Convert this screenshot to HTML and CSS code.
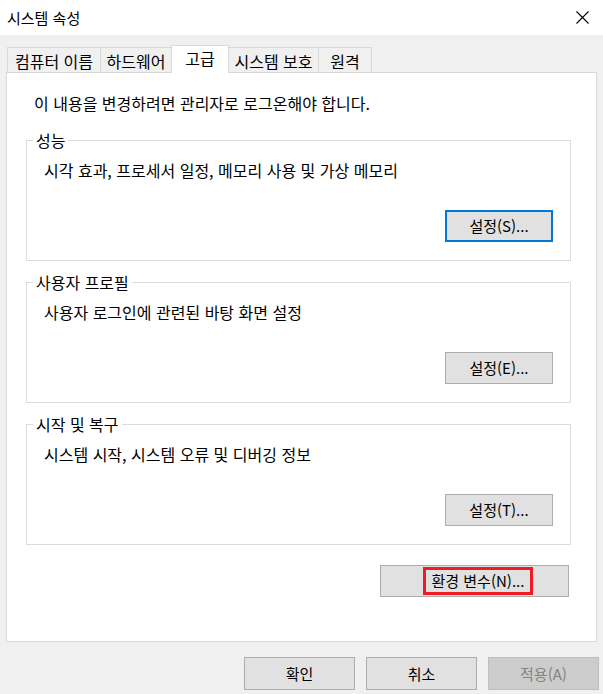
FILE: index.html
```html
<!DOCTYPE html>
<html lang="ko">
<head>
<meta charset="utf-8">
<title>시스템 속성</title>
<link rel="stylesheet" href="styles.css">
</head>
<body>
<div class="window">
  <div class="titlebar">
    <span class="title">시스템 속성</span>
    <span class="close">
      <svg width="13" height="13" viewBox="0 0 13 13"><path d="M0.5 0.5 L12.5 12.5 M12.5 0.5 L0.5 12.5" stroke="#000" stroke-width="1.1" fill="none"/></svg>
    </span>
  </div>
  <div class="tabs">
    <div class="tab t1">컴퓨터 이름</div>
    <div class="tab t2">하드웨어</div>
    <div class="tab t3 active">고급</div>
    <div class="tab t4">시스템 보호</div>
    <div class="tab t5">원격</div>
  </div>
  <div class="panel">
    <div class="intro">이 내용을 변경하려면 관리자로 로그온해야 합니다.</div>
    <div class="group first">
      <span class="legend">성능</span>
      <div class="desc">시각 효과, 프로세서 일정, 메모리 사용 및 가상 메모리</div>
      <button class="btn set focused">설정(S)...</button>
    </div>
    <div class="group">
      <span class="legend">사용자 프로필</span>
      <div class="desc">사용자 로그인에 관련된 바탕 화면 설정</div>
      <button class="btn set">설정(E)...</button>
    </div>
    <div class="group">
      <span class="legend">시작 및 복구</span>
      <div class="desc">시스템 시작, 시스템 오류 및 디버깅 정보</div>
      <button class="btn set">설정(T)...</button>
    </div>
    <button class="btn env"><span class="mark">환경 변수(N)...</span></button>
  </div>
  <div class="footer">
    <button class="btn foot">확인</button>
    <button class="btn foot">취소</button>
    <button class="btn foot disabled">적용(A)</button>
  </div>
</div>
</body>
</html>
```

FILE: styles.css
```css
* { box-sizing: border-box; }
html, body {
  margin: 0;
  padding: 0;
  background: #f0f0f0;
}
body {
  font-family: "Noto Sans CJK KR", "Noto Sans", sans-serif;
  font-size: 16px;
  color: #000;
}
.window {
  width: 603px;
  height: 694px;
  overflow: hidden;
}
.titlebar {
  height: 35px;
  background: #fff;
  display: flex;
  align-items: center;
  justify-content: space-between;
  padding: 0 14px 0 7px;
}
.title {
  font-size: 15px;
  line-height: 20px;
}
.close {
  display: flex;
  width: 13px;
  height: 13px;
}
.tabs {
  display: flex;
  align-items: flex-end;
  height: 37px;
  padding: 10px 0 0 7px;
  position: relative;
  z-index: 1;
}
.tab {
  height: 25px;
  border: 1px solid #d9d9d9;
  border-bottom: none;
  background: #f0f0f0;
  margin-left: -1px;
  display: flex;
  align-items: center;
  justify-content: center;
  line-height: 20px;
  padding-top: 1px;
  white-space: nowrap;
}
.t1 { width: 94px; margin-left: 0; }
.t2 { width: 72px; }
.t3 { width: 58px; }
.t4 { width: 91px; }
.t5 { width: 54px; }
.tab.active {
  height: 28px;
  background: #fff;
  margin-bottom: -1px;
  padding-top: 0;
  padding-bottom: 3px;
}
.panel {
  margin-left: 6px;
  width: 591px;
  height: 570px;
  background: #fff;
  border: 1px solid #d9d9d9;
  padding: 20px 25px 0 19px;
  display: flex;
  flex-direction: column;
}
.intro {
  line-height: 20px;
  margin-left: 8px;
}
.group {
  position: relative;
  border: 1px solid #dcdcdc;
  height: 121px;
  margin-top: 21px;
  padding: 19px 17px 0 17px;
  display: flex;
  flex-direction: column;
}
.group.first { margin-top: 27px; }
.legend {
  position: absolute;
  top: -11px;
  left: 6px;
  background: #fff;
  padding: 0 3px;
  line-height: 20px;
}
.desc {
  line-height: 20px;
}
.btn {
  font-family: inherit;
  font-size: 15px;
  color: #000;
  background: #e1e1e1;
  border: 1px solid #adadad;
  padding: 0;
  margin: 0;
  display: flex;
  align-items: center;
  justify-content: center;
  line-height: 20px;
}
.set {
  width: 108px;
  height: 32px;
  align-self: flex-end;
  margin-top: 30px;
}
.set.focused {
  border: 2px solid #0078d7;
}
.env {
  width: 189px;
  height: 32px;
  align-self: flex-end;
  margin-top: 20px;
  margin-right: 2px;
  padding-left: 7px;
}
.mark {
  display: flex;
  align-items: center;
  justify-content: center;
  width: 110px;
  height: 28px;
  border: 3px solid #ed1c24;
}
.footer {
  display: flex;
  justify-content: flex-end;
  gap: 11px;
  padding: 15px 4px 0 0;
}
.foot {
  width: 111px;
  height: 33px;
}
.foot.disabled {
  background: #cccccc;
  border-color: #bfbfbf;
  color: #838383;
}
```
